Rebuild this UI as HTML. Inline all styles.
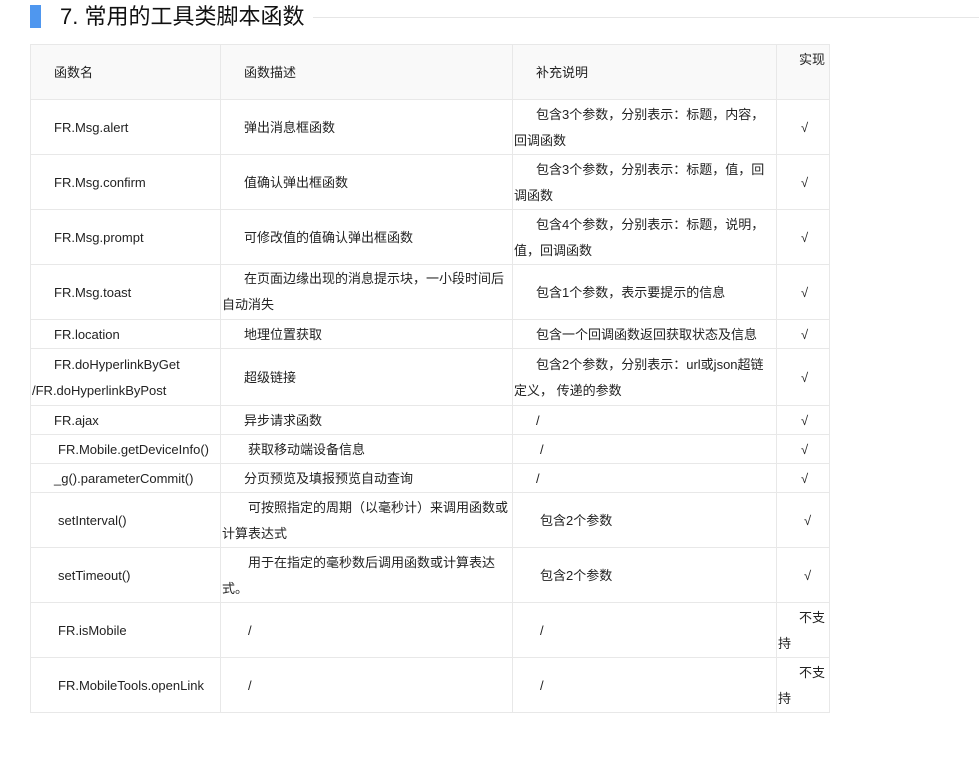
<!DOCTYPE html><html><head><meta charset="utf-8"><style>
body{margin:0;width:979px;height:773px;background:#fff;position:relative;font-family:"Liberation Sans","Noto Sans CJK SC",sans-serif;color:#222;font-size:13px;overflow:hidden}
.t{position:absolute;line-height:18px;white-space:nowrap}
.c{position:absolute;border-right:1px solid #e8e8e8;border-bottom:1px solid #e8e8e8;box-sizing:border-box}
</style></head><body>
<div style="position:absolute;left:30px;top:5px;width:11px;height:23px;background:#4f97ef"></div>
<div class="t" style="left:60px;top:4px;font-size:22px;line-height:26px;color:#111">7. 常用的工具类脚本函数</div>
<div style="position:absolute;left:313px;top:17px;width:666px;height:1px;background:#e6e6e6"></div>
<div style="position:absolute;left:30px;top:44px;width:800px;height:55px;background:#f9f9f9"></div>
<div style="position:absolute;left:30px;top:44px;width:800px;height:668px;border-left:1px solid #e8e8e8;border-top:1px solid #e8e8e8;box-sizing:border-box"></div>
<div id="g"></div>
<script>
var rows=[44,99,154,209,264,319,348,405,434,463,492,547,602,657,712],cols=[30,220,512,776,830],h='';
for(var i=0;i<rows.length-1;i++)for(var j=0;j<4;j++){h+='<div class="c" style="left:'+cols[j]+'px;top:'+rows[i]+'px;width:'+(cols[j+1]-cols[j]+(j==3?0:1))+'px;height:'+(rows[i+1]-rows[i]+1)+'px"></div>';}
var T=[[54,72,'函数名'],[244,72,'函数描述'],[536,72,'补充说明'],[799,59,'实现'],
[54,127,'FR.Msg.alert'],[244,127,'弹出消息框函数'],[536,114,'包含3个参数，分别表示：标题，内容，'],[514,140,'回调函数'],
[54,182,'FR.Msg.confirm'],[244,182,'值确认弹出框函数'],[536,169,'包含3个参数，分别表示：标题，值，回'],[514,195,'调函数'],
[54,237,'FR.Msg.prompt'],[244,237,'可修改值的值确认弹出框函数'],[536,224,'包含4个参数，分别表示：标题，说明，'],[514,250,'值，回调函数'],
[54,292,'FR.Msg.toast'],[244,278,'在页面边缘出现的消息提示块，一小段时间后'],[222,304,'自动消失'],[536,292,'包含1个参数，表示要提示的信息'],
[54,334,'FR.location'],[244,334,'地理位置获取'],[536,334,'包含一个回调函数返回获取状态及信息'],
[54,364,'FR.doHyperlinkByGet'],[32,390,'/FR.doHyperlinkByPost'],[244,377,'超级链接'],[536,364,'包含2个参数，分别表示：url或json超链'],[514,390,'定义， 传递的参数'],
[54,420,'FR.ajax'],[244,420,'异步请求函数'],[536,420,'/'],
[58,449,'FR.Mobile.getDeviceInfo()'],[248,449,'获取移动端设备信息'],[540,449,'/'],
[54,478,'_g().parameterCommit()'],[244,478,'分页预览及填报预览自动查询'],[536,478,'/'],
[58,520,'setInterval()'],[248,507,'可按照指定的周期（以毫秒计）来调用函数或'],[222,533,'计算表达式'],[540,520,'包含2个参数'],
[58,575,'setTimeout()'],[248,562,'用于在指定的毫秒数后调用函数或计算表达'],[222,588,'式。'],[540,575,'包含2个参数'],
[58,630,'FR.isMobile'],[248,630,'/'],[540,630,'/'],[799,617,'不支'],[778,643,'持'],
[58,685,'FR.MobileTools.openLink'],[248,685,'/'],[540,685,'/'],[799,672,'不支'],[778,698,'持']];
[127,182,237,292,334,377,420,449,478].forEach(function(y){T.push([801,y,'√'])});
[520,575].forEach(function(y){T.push([804,y,'√'])});
T.forEach(function(a){h+='<div class="t" style="left:'+a[0]+'px;top:'+(a[1]-8)+'px">'+a[2]+'</div>'});
document.getElementById('g').innerHTML=h;
</script>
</body></html>
